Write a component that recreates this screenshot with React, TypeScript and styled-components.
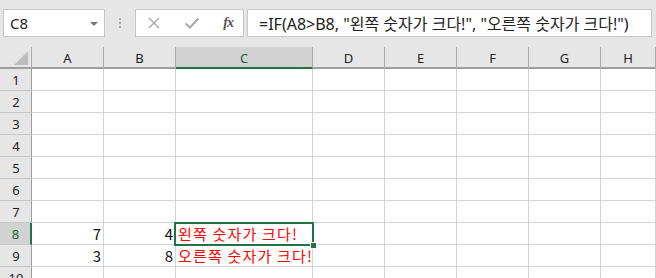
import React from "react";
import styled, { createGlobalStyle } from "styled-components";

const Global = createGlobalStyle`
  html, body { margin: 0; padding: 0; background: #e6e6e6; }
  body { width: 656px; height: 278px; overflow: hidden; }
  * { box-sizing: border-box; }
`;

const Page = styled.div`
  width: 656px;
  height: 278px;
  display: flex;
  flex-direction: column;
  background: #e6e6e6;
  overflow: hidden;
`;

const TopBar = styled.div`
  height: 47px;
  display: flex;
  align-items: flex-start;
  padding: 9px 4px 0 3px;
  flex-shrink: 0;
`;

const NameBox = styled.div`
  width: 102px;
  height: 28px;
  background: #fff;
  border: 1px solid #c6c6c6;
  display: flex;
  align-items: center;
  justify-content: space-between;
  padding: 0 6px 0 6px;
  font-family: "Noto Sans", "Open Sans", sans-serif;
  font-size: 15px;
  color: #222;
`;

const Caret = styled.span`
  width: 0;
  height: 0;
  border-left: 4px solid transparent;
  border-right: 4px solid transparent;
  border-top: 4px solid #777;
  margin-top: 1px;
`;

const Grip = styled.div`
  width: 30px;
  height: 28px;
  display: flex;
  flex-direction: column;
  align-items: center;
  justify-content: center;
  gap: 2px;
  span {
    width: 2px;
    height: 2px;
    background: #a6a6a6;
  }
`;

const ToolBox = styled.div`
  width: 109px;
  height: 28px;
  background: #fff;
  border: 1px solid #c6c6c6;
  display: flex;
  align-items: center;
  justify-content: space-between;
  padding: 0 10px 0 11px;
`;

const Fx = styled.span`
  font-family: "Liberation Serif", "DejaVu Serif", serif;
  font-style: italic;
  font-weight: bold;
  font-size: 14px;
  color: #555;
  letter-spacing: -1px;
`;

const FormulaBar = styled.div`
  flex: 1;
  margin-left: 3px;
  height: 28px;
  background: #fff;
  border: 1px solid #c6c6c6;
  display: flex;
  align-items: center;
  padding-left: 11px;
  font-family: "Noto Sans", "Noto Sans CJK KR", sans-serif;
  font-size: 16px;
  color: #222;
  white-space: nowrap;
  overflow: hidden;
`;

const Sheet = styled.div`
  flex: 1;
  display: grid;
  grid-template-columns: 32px 72px 72px 137px 72px 72px 72px 72px 1fr;
  grid-auto-rows: 22px;
  background: #fff;
  overflow: hidden;
`;

const ColHead = styled.div<{ $sel?: boolean }>`
  background: ${(p) => (p.$sel ? "#d2d2d2" : "#e6e6e6")};
  border-right: 1px solid #ababab;
  border-bottom: 2px solid ${(p) => (p.$sel ? "#217346" : "#9f9f9f")};
  display: flex;
  align-items: center;
  justify-content: center;
  font-family: "Noto Sans", sans-serif;
  font-size: 13px;
  color: ${(p) => (p.$sel ? "#1e5f3a" : "#222")};
  padding-top: 1px;
`;

const Corner = styled.div`
  background: #e6e6e6;
  border-right: 1px solid #ababab;
  border-bottom: 2px solid #9f9f9f;
  display: flex;
  align-items: flex-end;
  justify-content: flex-end;
  padding: 0 3px 2px 0;
`;

const CornerTri = styled.span`
  width: 14px;
  height: 14px;
  background: #bdbdbd;
  clip-path: polygon(100% 0, 100% 100%, 0 100%);
`;

const RowHead = styled.div<{ $sel?: boolean }>`
  background: ${(p) => (p.$sel ? "#d2d2d2" : "#e6e6e6")};
  border-right: ${(p) => (p.$sel ? "2px solid #217346" : "1px solid #9f9f9f")};
  border-bottom: 1px solid #c8c8c8;
  display: flex;
  align-items: center;
  justify-content: center;
  font-family: "Noto Sans", sans-serif;
  font-size: 13px;
  color: ${(p) => (p.$sel ? "#1e5f3a" : "#222")};
  padding-left: 1px;
`;

const Cell = styled.div<{ $num?: boolean; $red?: boolean }>`
  position: relative;
  border-right: 1px solid #d4d4d4;
  border-bottom: 1px solid #d4d4d4;
  font-family: "Noto Sans CJK KR", "Noto Sans", sans-serif;
  font-size: 15px;
  line-height: 21px;
  color: ${(p) => (p.$red ? "#ff0000" : "#111")};
  letter-spacing: ${(p) => (p.$red ? "1.2px" : "0")};
  text-align: ${(p) => (p.$num ? "right" : "left")};
  padding: 0 2px;
  white-space: nowrap;
  overflow: visible;
`;

const SelBorder = styled.div`
  position: absolute;
  z-index: 2;
  left: -2px;
  top: -1px;
  right: -2px;
  bottom: -2px;
  border: 2px solid #217346;
  pointer-events: none;
`;

const Handle = styled.div`
  position: absolute;
  right: -5px;
  bottom: -5px;
  width: 7px;
  height: 7px;
  background: #217346;
  border: 1px solid #fff;
`;

const cols = ["A", "B", "C", "D", "E", "F", "G", "H"];

type CellData = { v: string; num?: boolean; red?: boolean };
const data: Record<string, CellData> = {
  A8: { v: "7", num: true },
  B8: { v: "4", num: true },
  C8: { v: "왼쪽 숫자가 크다!", red: true },
  A9: { v: "3", num: true },
  B9: { v: "8", num: true },
  C9: { v: "오른쪽 숫자가 크다!", red: true },
};

const XIcon = () => (
  <svg width="14" height="14" viewBox="0 0 14 14">
    <path d="M2 2 L12 12 M12 2 L2 12" stroke="#a8a8a8" strokeWidth="1.4" fill="none" />
  </svg>
);

const CheckIcon = () => (
  <svg width="16" height="14" viewBox="0 0 16 14">
    <path d="M1.5 7.5 L6 11.5 L14.5 2.5" stroke="#a8a8a8" strokeWidth="2" fill="none" />
  </svg>
);

export default function App() {
  const rows = Array.from({ length: 10 }, (_, i) => i + 1);
  return (
    <Page>
      <Global />
      <TopBar>
        <NameBox>
          C8
          <Caret />
        </NameBox>
        <Grip>
          <span />
          <span />
          <span />
        </Grip>
        <ToolBox>
          <XIcon />
          <CheckIcon />
          <Fx>fx</Fx>
        </ToolBox>
        <FormulaBar>=IF(A8&gt;B8, "왼쪽 숫자가 크다!", "오른쪽 숫자가 크다!")</FormulaBar>
      </TopBar>
      <Sheet>
        <Corner>
          <CornerTri />
        </Corner>
        {cols.map((c) => (
          <ColHead key={c} $sel={c === "C"}>
            {c}
          </ColHead>
        ))}
        {rows.map((r) => (
          <React.Fragment key={r}>
            <RowHead $sel={r === 8}>{r}</RowHead>
            {cols.map((c) => {
              const id = `${c}${r}`;
              const d = data[id];
              return (
                <Cell key={id} $num={d?.num} $red={d?.red}>
                  {d?.v}
                  {id === "C8" && (
                    <SelBorder>
                      <Handle />
                    </SelBorder>
                  )}
                </Cell>
              );
            })}
          </React.Fragment>
        ))}
      </Sheet>
    </Page>
  );
}
